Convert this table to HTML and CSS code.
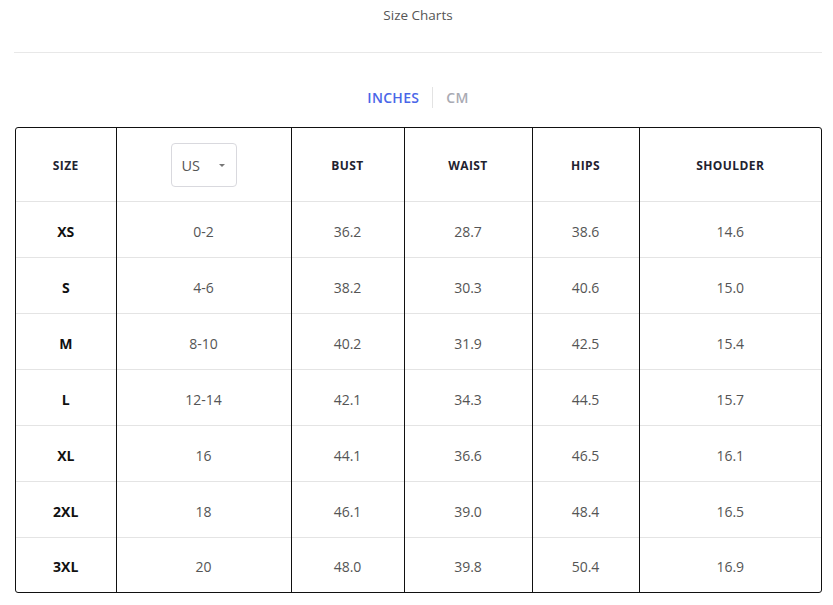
FILE: index.html
```html
<!DOCTYPE html>
<html>
<head>
<meta charset="utf-8">
<link rel="stylesheet" href="styles.css">
</head>
<body>
<div class="page">
  <div class="title">Size Charts</div>
  <div class="units">
    <span class="unit active">INCHES</span>
    <span class="sep"></span>
    <span class="unit">CM</span>
  </div>
  <div class="tablewrap">
    <table class="chart">
      <colgroup>
        <col class="c1"><col class="c2"><col class="c3"><col class="c4"><col class="c5"><col class="c6">
      </colgroup>
      <thead>
        <tr>
          <th>SIZE</th>
          <th><div class="select"><span>US</span><span class="caret"></span></div></th>
          <th>BUST</th>
          <th>WAIST</th>
          <th>HIPS</th>
          <th>SHOULDER</th>
        </tr>
      </thead>
      <tbody>
        <tr><td class="sz">XS</td><td>0-2</td><td>36.2</td><td>28.7</td><td>38.6</td><td>14.6</td></tr>
        <tr><td class="sz">S</td><td>4-6</td><td>38.2</td><td>30.3</td><td>40.6</td><td>15.0</td></tr>
        <tr><td class="sz">M</td><td>8-10</td><td>40.2</td><td>31.9</td><td>42.5</td><td>15.4</td></tr>
        <tr><td class="sz">L</td><td>12-14</td><td>42.1</td><td>34.3</td><td>44.5</td><td>15.7</td></tr>
        <tr><td class="sz">XL</td><td>16</td><td>44.1</td><td>36.6</td><td>46.5</td><td>16.1</td></tr>
        <tr><td class="sz">2XL</td><td>18</td><td>46.1</td><td>39.0</td><td>48.4</td><td>16.5</td></tr>
        <tr class="last"><td class="sz">3XL</td><td>20</td><td>48.0</td><td>39.8</td><td>50.4</td><td>16.9</td></tr>
      </tbody>
    </table>
  </div>
</div>
</body>
</html>
```
FILE: styles.css
```css
html, body {
  margin: 0;
  padding: 0;
  background: #fff;
}
body {
  font-family: "Open Sans", "Noto Sans", "Liberation Sans", sans-serif;
  color: #333;
}
.page {
  padding: 0 11px 0 14px;
}
.title {
  height: 53px;
  box-sizing: border-box;
  padding-top: 5px;
  text-align: center;
  font-size: 13.5px;
  line-height: 20px;
  color: #555;
  border-bottom: 1px solid #e8e8e8;
}
.units {
  display: flex;
  justify-content: center;
  align-items: center;
  box-sizing: border-box;
  height: 74px;
  padding: 14px 0 0 0;
}
.unit {
  font-size: 14px;
  font-weight: 600;
  color: #a9aab3;
  letter-spacing: 0.3px;
}
.unit.active {
  color: #4a66e8;
}
.sep {
  width: 1px;
  height: 21px;
  background: #e3e3e3;
  margin: 0 13px 0 13px;
}
.tablewrap {
  margin-left: 1px;
  width: 805px;
  border: 1px solid #111;
  border-radius: 3px;
  overflow: hidden;
}
.chart {
  width: 100%;
  border-collapse: collapse;
  table-layout: fixed;
}
.c1 { width: 100px; }
.c2 { width: 175px; }
.c3 { width: 113px; }
.c4 { width: 128px; }
.c5 { width: 107px; }
.c6 { width: auto; }
.chart th, .chart td {
  border-left: 1px solid #111;
  text-align: center;
  padding: 0;
}
.chart th:first-child, .chart td:first-child {
  border-left: none;
}
.chart th {
  height: 73px;
  padding-top: 2px;
  box-sizing: border-box;
  font-size: 12px;
  font-weight: 700;
  letter-spacing: 0.4px;
  color: #1f2330;
}
.chart td {
  height: 56px;
  padding-top: 4px;
  box-sizing: border-box;
  border-top: 1px solid #e4e4e4;
  font-size: 14px;
  color: #555;
}
.chart tr.last td {
  height: 55px;
  padding-top: 3px;
}
.chart td.sz {
  font-weight: 700;
  color: #111;
  font-size: 14px;
}
.select {
  display: inline-flex;
  align-items: center;
  justify-content: space-between;
  box-sizing: border-box;
  width: 66px;
  height: 44px;
  padding: 0 11px 0 10px;
  border: 1px solid #d9d9de;
  border-radius: 4px;
  font-size: 14.5px;
  font-weight: 400;
  color: #555;
  letter-spacing: 0;
  vertical-align: middle;
}
.caret {
  width: 0;
  height: 0;
  border-left: 3px solid transparent;
  border-right: 3px solid transparent;
  border-top: 3px solid #777;
}
```
